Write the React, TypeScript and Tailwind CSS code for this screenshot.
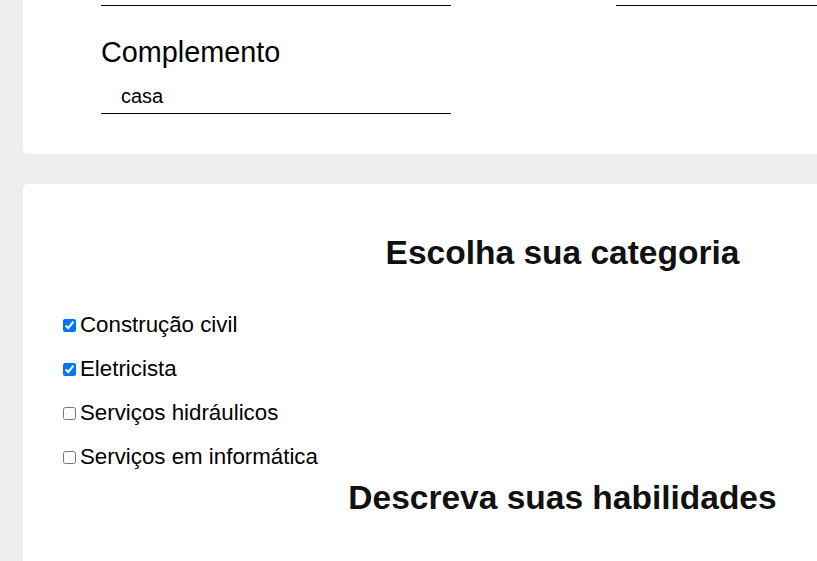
import React from 'react';

const categories = [
  { label: 'Construção civil', checked: true },
  { label: 'Eletricista', checked: true },
  { label: 'Serviços hidráulicos', checked: false },
  { label: 'Serviços em informática', checked: false },
];

const App: React.FC = () => {
  return (
    <div
      className="min-h-[561px] w-full overflow-hidden bg-[#eeeeee] pl-[23px] text-black"
      style={{ fontFamily: '"Liberation Sans", Arial, sans-serif' }}
    >
      {/* Endereço (parte de baixo do cartão) */}
      <div className="w-[1079px] rounded-b-[5px] bg-white pb-10">
        <div className="flex gap-[165px] pl-[78px]">
          <div className="h-[6px] w-[350px] border-b border-black" />
          <div className="h-[6px] w-[350px] border-b border-black" />
        </div>

        <div className="mt-[30px] pl-[78px]">
          <label className="block text-[28.8px] leading-[normal]">Complemento</label>
          <input
            readOnly
            value="casa"
            className="mt-[7px] block h-[38px] w-[350px] border-b border-black pt-[3px] pl-5 text-[20px] outline-none"
            style={{ fontFamily: '"Liberation Sans", Arial, sans-serif' }}
          />
        </div>
      </div>

      {/* Categorias */}
      <div className="mt-[30px] w-[1079px] rounded-[5px] bg-white pt-[50px] pl-10 pb-20">
        <h2 className="pr-10 text-center text-[33.5px] font-bold leading-[normal] text-[#111111]">
          Escolha sua categoria
        </h2>

        <div className="mt-[31px]">
          {categories.map((c) => (
            <label key={c.label} className="flex h-[44px] items-center">
              <input type="checkbox" defaultChecked={c.checked} className="m-0 h-[13px] w-[13px]" />
              <span className="ml-[4px] text-[22.3px] leading-[normal]">{c.label}</span>
            </label>
          ))}
        </div>

        <h2 className="pr-10 text-center text-[33.5px] font-bold leading-[normal] text-[#111111]">
          Descreva suas habilidades
        </h2>
      </div>
    </div>
  );
};

export default App;
